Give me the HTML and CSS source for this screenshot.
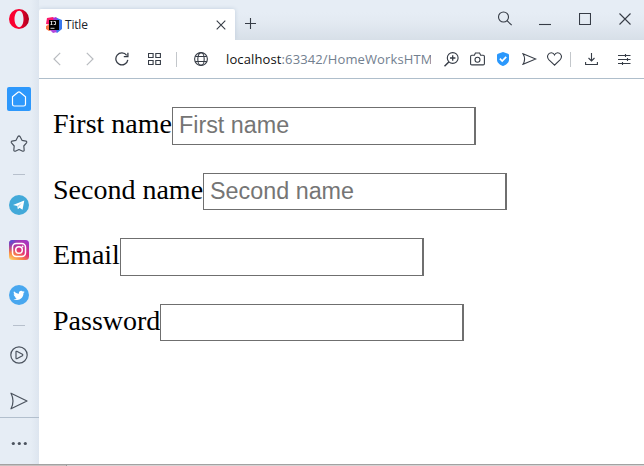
FILE: index.html
```html
<!DOCTYPE html>
<html lang="en">
<head>
<meta charset="utf-8">
<title>Title</title>
<link rel="stylesheet" href="styles.css">
</head>
<body>
<div class="window">
  <aside class="sidebar">
    <svg class="opera" viewBox="0 0 20 20"><defs><linearGradient id="op" x1="0" x2="1"><stop offset=".5" stop-color="#fa0030"/><stop offset="1" stop-color="#a8001c"/></linearGradient></defs><path fill="url(#op)" fill-rule="evenodd" d="M10 0a10 10 0 1 0 0 20 10 10 0 0 0 0-20zM10.200 1.800c2.500 0 4.300 3.500 4.300 8.200s-1.800 8.200-4.300 8.200S5.500 14.700 5.500 10s2.200-8.200 4.700-8.200z"/></svg>
    <span class="home"><svg width="24" height="24" viewBox="0 0 24 24"><path d="M5.500 9.800 11 5.200q1-.8 2 0l5.500 4.600v7.400q0 1.800-1.800 1.800H7.300q-1.800 0-1.800-1.800z"/></svg></span>
    <svg class="star line" viewBox="0 0 18 18"><path d="M8 1.500q1-1 2 0l2 3.800 4 .8q1.200.7.500 1.700l-2.700 3.200.4 4.300q-.3 1.200-1.500.9L9 14.500l-3.700 1.700q-1.200.3-1.500-.9l.4-4.300-2.700-3.200Q.8 6.800 2 6.100l4-.8z"/></svg>
    <i class="rule first"></i>
    <svg class="app telegram" viewBox="0 0 20 20"><circle cx="10" cy="10" r="10" fill="#42a9d9"/><path fill="#fff" d="m4 10 11.300-4.400-1.800 9.200-3-2.100-1.600 1.600-.6-3.200L4 10z"/><path d="m8.300 11.100 4.700-3.400-3.800 4.400-.3 2.200z" fill="#a8d4ea"/></svg>
    <svg class="app insta" viewBox="0 0 20 20"><defs><linearGradient id="ig" x1=".1" y1="1" x2=".7" y2="0"><stop offset="0" stop-color="#ffd569"/><stop offset=".25" stop-color="#fa8a45"/><stop offset=".55" stop-color="#e22f78"/><stop offset="1" stop-color="#a338c2"/></linearGradient><radialGradient id="ib" cx=".05" cy="0" r=".65"><stop offset="0" stop-color="#3d5be0"/><stop offset="1" stop-color="#8a3ac8" stop-opacity="0"/></radialGradient></defs><rect width="20" height="20" rx="3.500" fill="url(#ig)"/><rect width="20" height="20" rx="3.500" fill="url(#ib)"/><g fill="none" stroke="#fff" stroke-width="1.500"><rect x="3.500" y="3.500" width="13" height="13" rx="3.700"/><circle cx="10" cy="10" r="3.300"/></g><circle cx="13.600" cy="6.400" r=".9" fill="#fff"/></svg>
    <svg class="app" viewBox="0 0 20 20"><circle cx="10" cy="10" r="10" fill="#48a7ef"/><path fill="#fff" d="M15.800 6.700l-1.300 1.400c.1 4.100-2.900 7-6.500 7-1.300 0-2.500-.4-3.500-1 1.200.1 2.300-.2 3.200-.9-1-.1-1.800-.7-2.100-1.600h1c-1.200-.3-1.900-1.200-1.900-2.300l1 .2c-1-.7-1.400-2-.7-3.200 1.300 1.500 2.900 2.400 4.900 2.500-.4-2.500 2.200-3.800 3.900-2.300l1.500-.6-.9 1.200z"/></svg>
    <i class="rule second"></i>
    <svg class="play line" viewBox="0 0 18 18"><circle cx="9" cy="9" r="8.200"/><path d="M6 5.900q0-.8.800-.6l5.600 3q.8.700 0 1.400l-5.600 3q-.8.200-.8-.6z"/></svg>
    <svg class="send line" viewBox="0 0 18 18"><path d="M1 1.200 17 9 1 16.800q4-7.800 0-15.600z"/></svg>
    <div class="more"><svg width="17" height="5" viewBox="0 0 17 5"><g fill="#4b535e"><circle cx="2.300" cy="2.500" r="1.600"/><circle cx="8.300" cy="2.500" r="1.600"/><circle cx="14.300" cy="2.500" r="1.600"/></g></svg></div>
  </aside>
  <main class="browser">
    <header class="tabs">
      <div class="tab">
        <svg class="favicon" viewBox="0 0 16 16"><path fill="#fb196c" d="M1 1 7 0l3 3-4 5-6-1z"/><path fill="#a630d8" d="m7 1 3-1 3 3-4 3z"/><path fill="#3978ee" d="m11 1 5 2v9l-5 4-3-3z"/><path fill="#fb7443" d="m0 9 4-2 2 6-3 1-3-2z"/><path fill="#b247dc" d="m4 13 5-2 2 4-4 1z"/><path d="M3 3h10v10H3z"/><path stroke="#fff" stroke-width=".8" fill="none" d="M4.500 4.500h2M5.500 4.500V7.500M4.500 7.500h2M7.500 4.500h2v3H7.700M4.500 11.300h4"/></svg>
        <span class="title">Title</span>
        <svg class="close dark" width="10" height="10" viewBox="0 0 10 10"><path d="m.7.700 8.600 8.600M9.300.7.700 9.300"/></svg>
      </div>
      <svg class="plus dark" width="11" height="11" viewBox="0 0 11 11"><path d="M5.500 0v11M0 5.500h11"/></svg>
      <div class="controls">
        <svg class="dark" width="16" height="16" viewBox="0 0 16 16"><circle cx="6.500" cy="6" r="5"/><path d="m10 9.700 4.700 4.500"/></svg>
        <svg class="dark" width="12" height="16" viewBox="0 0 12 16"><path d="M0 13.500h12"/></svg>
        <svg class="dark" width="12" height="16" viewBox="0 0 12 16"><path d="M.5 2.500h11v11H.5z"/></svg>
        <svg class="dark" width="12" height="16" viewBox="0 0 12 16"><path d="m.5 2.500 11 11m0-11-11 11"/></svg>
      </div>
    </header>
    <nav class="toolbar">
      <svg class="pale" width="8" height="14" viewBox="0 0 8 14"><path d="M7.200.8 1 7l6.200 6.200"/></svg>
      <svg class="pale forward" width="8" height="14" viewBox="0 0 8 14"><path d="M.8.800 7 7 .8 13.200"/></svg>
      <svg class="dark reload" width="14" height="14" viewBox="0 0 14 14"><path stroke-width="1.300" d="M12.800 7.800A6 6 0 1 1 11.700 3.300M12.900.7v4H8.800"/></svg>
      <svg class="dark grid" width="13" height="12" viewBox="0 0 13 12"><path d="M.5.500h4.600v4H.5zM7.800.5h4.600v4H7.800zM.5 7.500h4.600v4H.5zM7.800 7.500h4.600v4H7.800z"/></svg>
      <i class="separator left"></i>
      <svg class="dark globe" width="14" height="14" viewBox="0 0 14 14"><circle cx="7" cy="7" r="6.400"/><ellipse cx="7" cy="7" rx="3.200" ry="6.400"/><path d="M1.300 4.500h11.400M1.300 9.500h11.400"/></svg>
      <span class="address">localhost<span class="path">:63342/HomeWorksHTM</span></span>
      <svg class="dark zoom" width="15" height="15" viewBox="0 0 15 15"><circle cx="8.700" cy="6" r="5.400"/><path stroke-width="1.500" d="M4.800 10 .5 14.300"/><path stroke-width="1.300" d="M8.700 3.300v5.400M6 6h5.400"/></svg>
      <svg class="dark camera" width="15" height="14" viewBox="0 0 15 14"><path d="M1.800 3.200h2.600l1-2.200h4.200l1 2.200h2.600q1.200 0 1.200 1.200v7.300q0 1.200-1.200 1.200H1.800q-1.200 0-1.200-1.200V4.400q0-1.200 1.200-1.200z"/><circle cx="7.500" cy="7.700" r="2.500"/></svg>
      <svg class="shield" width="12" height="14" viewBox="0 0 12 14"><path fill="#2b98fc" d="M6 0 11 1.700q1 .3 1 1.300v5c0 3-4 5.500-6 6-2-.5-6-3-6-6V3q0-1 1-1.300z"/><path fill="none" stroke="#fff" stroke-width="1.700" d="m2.900 6.700 2.300 2.400 4-4.200"/></svg>
      <svg class="dark plane" width="15" height="12" viewBox="0 0 15 12"><path d="M1 .7 13.800 6 1 11.300Q4.200 6 1 .7z"/></svg>
      <svg class="dark heart" width="15" height="14" viewBox="0 0 15 14"><path d="M7.500 13.200 2 7.800C-1 4.700 1.200.7 4.300.7c1.600 0 2.700 1 3.200 2.200C8 1.700 9.100.7 10.700.7c3.100 0 5.300 4 2.300 7.100z"/></svg>
      <i class="separator right"></i>
      <svg class="dark download" width="14" height="14" viewBox="0 0 14 14"><path d="M6.500 1v8M3.500 6l3 3 3-3M.6 10v2.500h11.800V10"/></svg>
      <svg class="dark sliders" width="13" height="11" viewBox="0 0 13 11"><path d="M0 1.500h12.500M0 5.500h12.500M0 9.500h12.500M7.500 0v3M9.500 4v3M4.500 8v3"/></svg>
    </nav>
    <form class="page">
      <label class="field">First name<input class="tall" type="text" placeholder="First name"></label>
      <label class="field">Second name<input type="text" placeholder="Second name"></label>
      <label class="field">Email<input class="tall" type="email"></label>
      <label class="field">Password<input type="password"></label>
    </form>
  </main>
  <footer class="edge"></footer>
</div>
</body>
</html>
```
FILE: styles.css
```css
* { box-sizing: border-box; }
body { margin: 0; overflow: hidden; background: #fff; }
svg { display: block; flex: none; }
i { display: block; flex: none; }
.window { display: grid; grid-template: 464px 2px / 39px 605px; width: 644px; height: 466px; }
.sidebar { display: flex; flex-direction: column; align-items: center; padding-top: 9px; background: linear-gradient(90deg, #e6edf5 31px, #dde5ef); }
.sidebar > * { flex: none; margin-right: 1px; }
.opera { width: 20px; height: 20px; }
.home { width: 24px; height: 24px; margin-top: 58px; border-radius: 2px; background: #2d98fc; }
.home svg { fill: none; stroke: #fff; stroke-width: 1.2; }
.line { width: 18px; height: 18px; fill: none; stroke: #4b535e; stroke-width: 1.2; stroke-linejoin: round; }
.star { margin-top: 24px; }
.rule { width: 12px; height: 1px; background: #b7c0cc; }
.rule.first { margin-top: 21px; }
.rule.second { margin-top: 20px; }
.app { width: 20px; height: 20px; margin-top: 25px; }
.app.telegram { margin-top: 20px; }
.play { margin-top: 20px; }
.send { margin-top: 28px; }
.more { display: flex; align-items: center; justify-content: center; width: 39px; height: 47px; margin: 7px 0 0; border-top: 1px solid #b2bfcd; }
.more svg { margin-top: 5px; }

.tabs { display: flex; height: 40px; background: linear-gradient(#e6edf5 12px, #e3eaf2 22px, #d7dfe8); }
.tab { display: flex; align-items: center; width: 196px; height: 31px; margin-top: 9px; padding: 0 9px 0 7px; border-radius: 2px 2px 0 0; background: #fff; box-shadow: 0 0 4px #bfcddc; clip-path: inset(-4px -4px 0 0); }
.favicon { width: 16px; height: 16px; }
.title { margin-left: 3px; color: #20242b; font: 12px/16px "Open Sans", sans-serif; letter-spacing: -.2px; }
.tab .close { margin-left: auto; }
.dark { fill: none; stroke: #363c46; stroke-width: 1.1; }
.plus { margin: 18px 0 0 10px; }
.controls { display: flex; gap: 28px; margin: 11px 13px 0 auto; }
.controls svg:first-child { margin-right: -2px; }

.toolbar { display: flex; align-items: center; height: 39px; padding: 0 13px 0 14px; border-bottom: 1px solid #afbecb; background: #fff; }
.pale { fill: none; stroke: #b9bcc0; stroke-width: 1.2; }
.forward { margin-left: 25px; }
.reload { margin-left: 21px; }
.grid { margin-left: 19px; }
.separator { width: 1px; height: 15px; background: #c3c7cb; }
.separator.left { margin-left: 15px; }
.globe { margin-left: 17px; }
.address { width: 205px; margin-left: 18px; overflow: hidden; white-space: nowrap; color: #111; font: 13px/20px "Open Sans", sans-serif; letter-spacing: .12px; }
.path { color: #72808f; }
.zoom { margin-left: 13px; }
.camera { margin-left: 11px; }
.shield { margin-left: 12px; }
.plane { margin-left: 13px; }
.heart { margin-left: 10px; }
.separator.right { margin-left: 8px; }
.download { margin-left: 14px; }
.sliders { margin-left: auto; }

.page { display: flex; flex-direction: column; gap: 28px; padding: 28px 0 0 14px; }
.field { display: flex; align-items: flex-start; height: 37.6px; color: #000; font: 28px/33px "Liberation Serif", serif; }
.field input { width: 304px; height: 37px; margin: 0; padding: 0 6px; border: 1px solid #6f6f6f; border-right-width: 2px; border-radius: 0; outline: 0; background: #fff; font: 23.333px/27px "Liberation Sans", sans-serif; }
.field input.tall { height: 38px; padding-bottom: 2px; }
.field input::placeholder { color: #757575; opacity: 1; }
.edge { grid-column: 1 / 3; border-top: 1px solid #a2a2a2; background: linear-gradient(90deg, #c6c1c0 66px, #999 66px, #999 67px, #d5d3d3 67px); }
```
